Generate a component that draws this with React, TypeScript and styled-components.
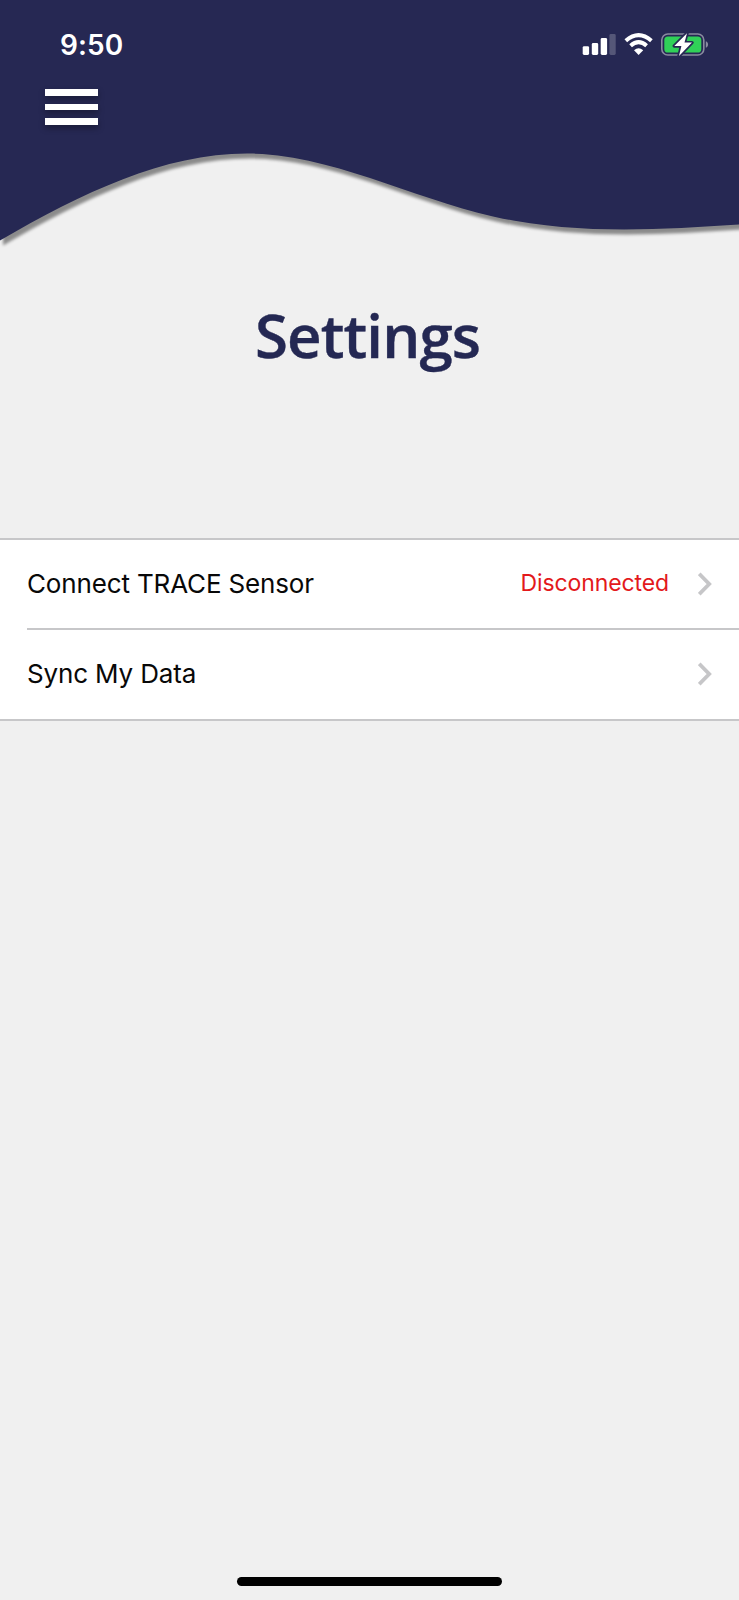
import React from "react";
import styled, { createGlobalStyle } from "styled-components";

const GlobalStyle = createGlobalStyle`
  *, *::before, *::after { box-sizing: border-box; }
  body { margin: 0; background: #f0f0f0; font-family: Inter, "Liberation Sans", sans-serif; }
`;

const Screen = styled.main`
  display: flex;
  flex-direction: column;
  width: 100%;
  height: 1600px;
  background: #f0f0f0;
  overflow: hidden;
`;

const Header = styled.header`
  position: relative;
  isolation: isolate;
  height: 260px;
  flex: none;
`;

const Wave = styled.svg`
  position: absolute;
  inset: 0;
  z-index: -1;
  display: block;
  filter: drop-shadow(3px 5px 1.5px rgba(0, 0, 0, 0.42));
`;

const StatusBar = styled.div`
  display: flex;
  align-items: center;
  justify-content: space-between;
  height: 89px;
  padding: 0 30px 0 60px;
`;

const Time = styled.time`
  font-size: 28px;
  font-weight: 600;
  line-height: 34px;
  letter-spacing: 0.1px;
  color: #fff;
`;

const StatusIcons = styled.svg`
  display: block;
  margin-bottom: 2px;
`;

const MenuButton = styled.button`
  display: flex;
  flex-direction: column;
  justify-content: space-between;
  width: 53.5px;
  height: 36px;
  margin: 0 0 0 44.7px;
  padding: 0;
  border: 0;
  background: none;
  filter: drop-shadow(0 3px 3px rgba(0, 0, 0, 0.35));
`;

const MenuLine = styled.span`
  height: 6.6px;
  background: #fff;
`;

const Title = styled.h1`
  margin: 34px 0 0;
  padding-right: 4px;
  font-family: "Open Sans", sans-serif;
  font-size: 60px;
  font-weight: 600;
  line-height: 82px;
  letter-spacing: -0.9px;
  text-align: center;
  color: #242853;
  -webkit-text-stroke: 0.4px #242853;
`;

const List = styled.ul`
  margin: 162px 0 0;
  padding: 0;
  list-style: none;
  background: #fff;
  border-top: 2px solid #c7c7c9;
  border-bottom: 2px solid #c7c7c9;
`;

const Row = styled.li<{ $divided?: boolean }>`
  display: flex;
  align-items: center;
  height: ${(p) => (p.$divided ? "90px" : "89px")};
  margin-left: 27px;
  padding: 0 27px ${(p) => (p.$divided ? "0" : "2px")} 0;
  border-bottom: ${(p) => (p.$divided ? "2px solid #c7c7c9" : "0")};
`;

const Label = styled.span`
  flex: 1;
  font-size: 26px;
  line-height: 32px;
  letter-spacing: -0.15px;
  color: #080808;
`;

const Status = styled.span`
  margin: 0 29px 2px 0;
  font-size: 23px;
  line-height: 28px;
  letter-spacing: -0.1px;
  color: #e3191b;
`;

const HomeIndicator = styled.div`
  width: 265px;
  height: 9px;
  margin: auto auto 14px;
  border-radius: 5px;
  background: #000;
`;

const Chevron = () => (
  <svg width="14" height="24" viewBox="0 0 14 24" fill="none">
    <path d="M1.2 1.8 11.2 12 1.2 22.2" stroke="#c6c6c8" strokeWidth="3.8" />
  </svg>
);

export default function App() {
  return (
    <>
      <GlobalStyle />
      <Screen>
        <Header>
          <Wave width="739" height="260" viewBox="0 0 739 260">
            <path
              fill="#262853"
              d="M0 0V240.5C82 193 164 153.5 247 153.5C329 153.5 411 198 493 216.5C575 235 657 230 739 224.5V0Z"
            />
          </Wave>
          <StatusBar>
            <Time>9:50</Time>
            <StatusIcons width="127" height="24" viewBox="0 0 127 24">
              <g fill="#fff">
                <rect x="0.7" y="14.2" width="6.4" height="8.8" rx="1.4" />
                <rect x="9.8" y="11" width="6.4" height="12" rx="1.4" />
                <rect x="18.7" y="6" width="6.4" height="17" rx="1.4" />
                <rect x="27.4" y="2" width="6.3" height="21" rx="1.4" opacity="0.22" />
              </g>
              <g fill="none" stroke="#fff" strokeWidth="4">
                <path d="M43.8 8.8Q56.6-2.4 69.4 8.8" />
                <path d="M48.6 13.8Q56.6 6.6 64.6 13.8" />
              </g>
              <path fill="#fff" d="M52 18.2Q56.6 14.4 61.2 18.2L56.6 23Z" />
              <rect x="79.8" y="2" width="42" height="21" rx="6" fill="none" stroke="#898a9f" strokeWidth="1.6" />
              <path d="M123.8 9.2c3 .8 3 5.8 0 6.6Z" fill="#898a9f" />
              <rect x="82.3" y="4.5" width="37" height="16" rx="3.6" fill="#30d158" />
              <path
                d="M105 1.2 92.3 14H99.4L97 24 110 10.6H102.5Z"
                fill="#fff"
                stroke="#262853"
                strokeWidth="3.4"
                strokeLinejoin="round"
                paintOrder="stroke"
              />
            </StatusIcons>
          </StatusBar>
          <MenuButton aria-label="Menu">
            <MenuLine />
            <MenuLine />
            <MenuLine />
          </MenuButton>
        </Header>
        <Title>Settings</Title>
        <List>
          <Row $divided>
            <Label>Connect TRACE Sensor</Label>
            <Status>Disconnected</Status>
            <Chevron />
          </Row>
          <Row>
            <Label>Sync My Data</Label>
            <Chevron />
          </Row>
        </List>
        <HomeIndicator />
      </Screen>
    </>
  );
}
